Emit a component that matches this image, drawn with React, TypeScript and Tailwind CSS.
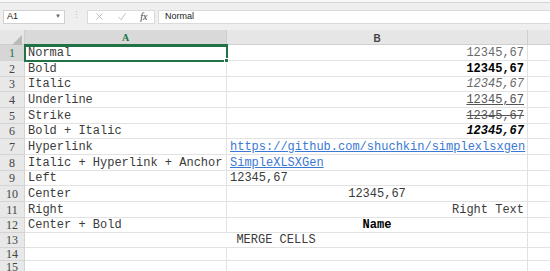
import { ReactNode } from 'react';

type Row = {
  n: number;
  h: number;
  a?: ReactNode;
  b?: ReactNode;
  align?: 'left' | 'center' | 'right';
  merged?: ReactNode;
};

const numCls = 'text-[#3b3b3b]';

const rows: Row[] = [
  { n: 1, h: 16, a: 'Normal', b: <span className="text-[#6a6a6a]">12345,67</span>, align: 'right' },
  { n: 2, h: 16, a: 'Bold', b: <span className="font-bold text-black">12345,67</span>, align: 'right' },
  { n: 3, h: 15, a: 'Italic', b: <span className="italic text-[#6a6a6a]">12345,67</span>, align: 'right' },
  { n: 4, h: 16, a: 'Underline', b: <span className="underline text-[#555]">12345,67</span>, align: 'right' },
  { n: 5, h: 16, a: 'Strike', b: <span className="line-through text-[#555]">12345,67</span>, align: 'right' },
  { n: 6, h: 15, a: 'Bold + Italic', b: <span className="font-bold italic text-black">12345,67</span>, align: 'right' },
  {
    n: 7,
    h: 16,
    a: 'Hyperlink',
    b: <span className="underline text-[#3a78d4]">https://github.com/shuchkin/simplexlsxgen</span>,
  },
  { n: 8, h: 16, a: 'Italic + Hyperlink + Anchor', b: <span className="underline text-[#3a78d4]">SimpleXLSXGen</span> },
  { n: 9, h: 15, a: 'Left', b: <span className={numCls}>12345,67</span> },
  { n: 10, h: 16, a: 'Center', b: <span className={numCls}>12345,67</span>, align: 'center' },
  { n: 11, h: 16, a: 'Right', b: <span className={numCls}>Right Text</span>, align: 'right' },
  { n: 12, h: 15, a: 'Center + Bold', b: <span className="font-bold text-black">Name</span>, align: 'center' },
  { n: 13, h: 15, merged: 'MERGE CELLS' },
  { n: 14, h: 13 },
  { n: 15, h: 13 },
];

function Toolbar() {
  return (
    <div className="h-[30px] bg-[#efefef] flex flex-col">
      <div className="h-[3px] bg-[#f8f8f8] border-b border-[#d6d6d6]" />
      <div className="flex items-center flex-1 pl-[3px] gap-0">
        <div className="w-[62px] h-[14px] bg-white border border-[#d0d0d0] flex items-center justify-between px-[3px] text-[9px] text-[#222] font-['Liberation_Sans',sans-serif]">
          <span>A1</span>
          <span className="text-[6px] text-[#666]">▼</span>
        </div>
        <div className="w-[22px] flex justify-center text-[#bbb] text-[9px] leading-none">⋮</div>
        <div className="w-[68px] h-[14px] bg-white border border-[#dadada] flex items-center justify-around text-[#b5b5b5]">
          <svg width="9" height="9" viewBox="0 0 10 10">
            <path d="M1.5 1.5 L8.5 8.5 M8.5 1.5 L1.5 8.5" stroke="#b8b8b8" strokeWidth="1" fill="none" />
          </svg>
          <svg width="10" height="9" viewBox="0 0 10 10">
            <path d="M1 5.5 L4 8.5 L9 1.5" stroke="#b8b8b8" strokeWidth="1" fill="none" />
          </svg>
          <span className="text-[10px] italic text-[#444] font-['Liberation_Serif',serif]">fx</span>
        </div>
        <div className="ml-[3px] flex-1 h-[14px] bg-white border-y border-l border-[#dadada] flex items-center pl-[6px] text-[9px] text-[#222] font-['Liberation_Sans',sans-serif]">
          Normal
        </div>
      </div>
    </div>
  );
}

function HeaderRow() {
  return (
    <div className="grid grid-cols-[25px_202px_301px_1fr] h-[15px] bg-[#e6e6e6] border-b border-[#cfcfcf]">
      <div className="relative border-r border-[#cfcfcf]">
        <div className="absolute right-[2px] bottom-[2px] w-0 h-0 border-l-[10px] border-l-transparent border-b-[10px] border-b-[#b9b9b9]" />
      </div>
      <div className="flex items-center justify-center border-r border-[#cfcfcf] border-b-2 border-b-[#217346] bg-[#d9d9d9] text-[10px] font-bold text-[#217346] font-['Liberation_Serif',serif]">
        A
      </div>
      <div className="flex items-center justify-center border-r border-[#cfcfcf] text-[10px] font-bold text-[#444] font-['Liberation_Sans',sans-serif]">
        B
      </div>
      <div />
    </div>
  );
}

function SheetRow({ r }: { r: Row }) {
  const sel = r.n === 1;
  const justify = r.align === 'right' ? 'justify-end' : r.align === 'center' ? 'justify-center' : 'justify-start';
  return (
    <div className="grid grid-cols-[25px_202px_301px_1fr]" style={{ height: r.h }}>
      <div
        className={`flex items-center justify-center border-r border-b border-[#d4d4d4] text-[12px] leading-none font-['Liberation_Serif',serif] ${
          sel ? 'bg-[#d6d6d6] text-[#217346]' : 'bg-[#e8e8e8] text-[#444]'
        }`}
      >
        {r.n}
      </div>
      {r.merged !== undefined ? (
        <div className="col-span-2 flex items-center justify-center border-r border-b border-[#e2e2e2] text-[12px] leading-none text-[#3b3b3b]">
          {r.merged}
        </div>
      ) : (
        <>
          <div
            className={`relative flex items-center px-[3px] border-r border-b border-[#e2e2e2] text-[12px] leading-none text-[#3b3b3b] ${
              sel ? 'outline-2 outline-[#217346] -outline-offset-1 z-10' : ''
            }`}
          >
            {r.a}
            {sel && <div className="absolute -right-[3px] -bottom-[3px] w-[5px] h-[5px] bg-[#217346] border border-white" />}
          </div>
          <div className={`flex items-center ${justify} px-[3px] border-r border-b border-[#e2e2e2] text-[12px] leading-none`}>
            {r.b}
          </div>
        </>
      )}
      <div className="border-b border-[#e2e2e2]" />
    </div>
  );
}

export default function App() {
  return (
    <div className="w-[550px] h-[271px] overflow-hidden bg-white font-['Liberation_Mono',monospace]">
      <Toolbar />
      <HeaderRow />
      {rows.map((r) => (
        <SheetRow key={r.n} r={r} />
      ))}
    </div>
  );
}
